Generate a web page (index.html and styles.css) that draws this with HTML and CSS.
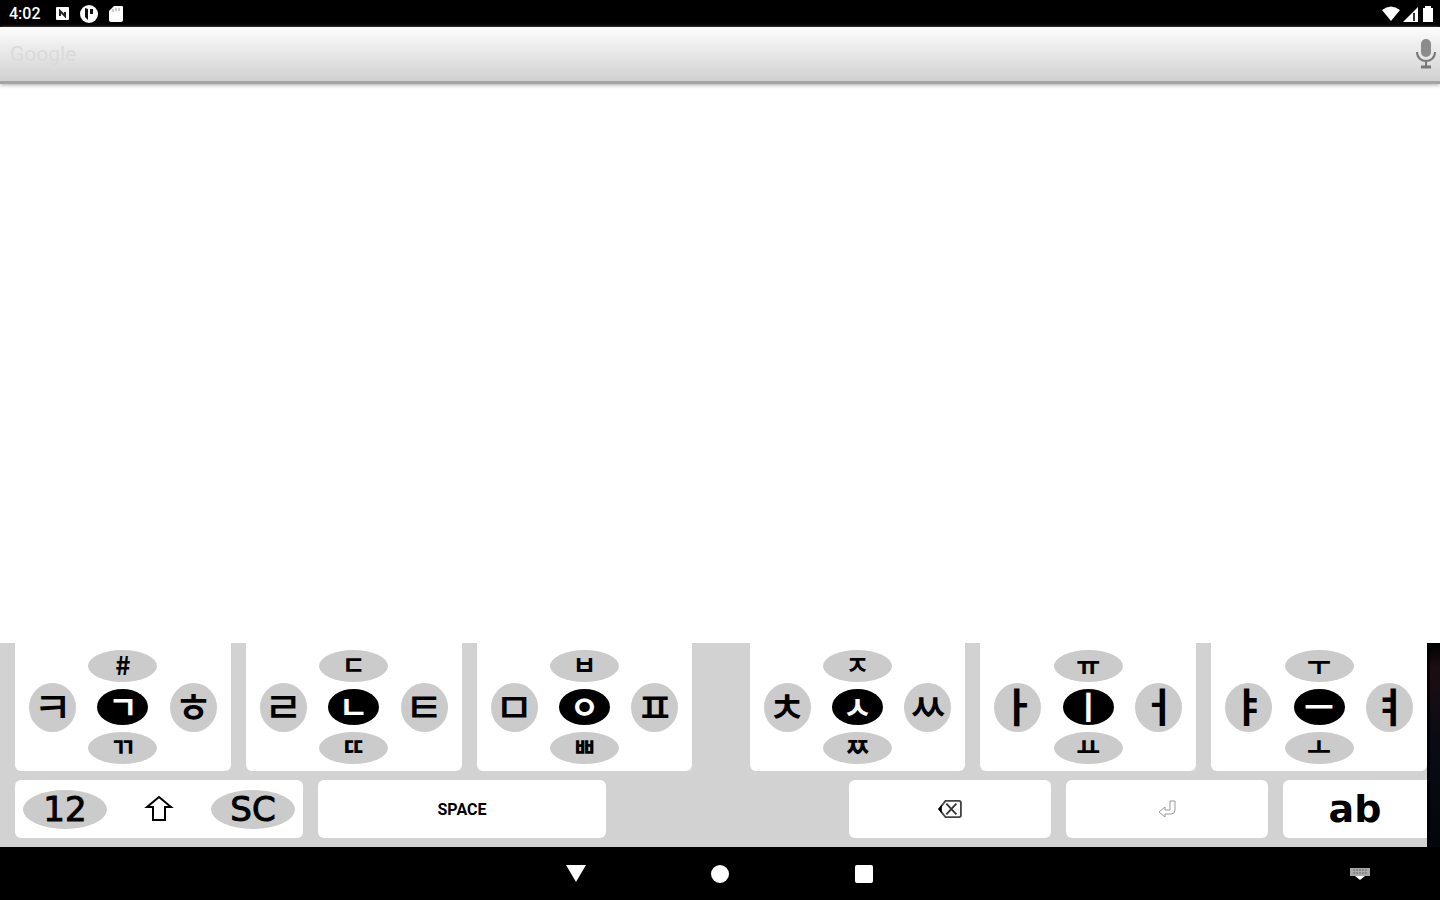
FILE: index.html
```html
<!DOCTYPE html>
<html lang="ko">
<head>
    <meta charset="UTF-8">
    <meta name="viewport" content="width=device-width, initial-scale=1.0">
    <title>Keyboard</title>
    <link rel="stylesheet" href="styles.css">
</head>
<body>
    <header class="status-bar">
        <span class="clock">4:02</span>
        <svg class="status-icon" viewBox="0 0 18 18">
            <rect x="3" y="2" width="13" height="13" rx="1" fill="#fff"/>
            <path d="M7 11V6l5 5V7" fill="none" stroke="#222" stroke-width="2"/>
        </svg>
        <svg class="status-icon" viewBox="0 0 18 18">
            <circle cx="9" cy="9" r="9" fill="#fff"/>
            <path d="M5 3v9l3 3V4zM10 4h3v5h-3z" fill="#111"/>
        </svg>
        <svg class="status-icon" viewBox="0 0 18 18">
            <path d="M7 1h8q1 0 1 1v13q0 2-2 2H4q-2 0-2-2V6z" fill="#fff"/>
            <path d="M6 4v3M9 3v3M12 3v3" stroke="#999" stroke-width="1"/>
        </svg>
        <div class="status-right">
            <svg width="18" height="16" viewBox="0 0 18 16"><path d="M0 4q9-7 18 0L9 15z" fill="#fff"/></svg>
            <svg width="16" height="16" viewBox="0 0 16 16">
                <path d="M0 16 15 1v15z" fill="#fff"/>
                <path d="M11 7v8" stroke="#333" stroke-width="2"/>
            </svg>
            <svg width="12" height="16" viewBox="0 0 12 16"><path d="M3 2V0h6v2h2v14H1V2z" fill="#fff"/></svg>
        </div>
    </header>

    <form class="search-bar">
        <label for="search">Google</label>
        <input type="text" id="search" name="search">
        <button type="button" class="mic" aria-label="Voice search">
            <svg width="20" height="32" viewBox="0 0 20 32">
                <rect x="5" y="1" width="10" height="18" rx="5" fill="#8c8c8c"/>
                <path d="M1 14c0 12 18 12 18 0M10 23v6" fill="none" stroke="#777" stroke-width="2"/>
                <path d="M5 29h10" stroke="#777" stroke-width="3"/>
            </svg>
        </button>
    </form>

    <main class="page"></main>

    <section class="keyboard-area">
        <div class="keyboard">
            <div class="letter-row">
                <div class="key-group">
                    <div class="key">
                        <button class="side">ㅋ</button>
                        <div class="middle">
                            <button class="wide">#</button>
                            <button class="center">ㄱ</button>
                            <button class="wide">ㄲ</button>
                        </div>
                        <button class="side">ㅎ</button>
                    </div>
                    <div class="key">
                        <button class="side">ㄹ</button>
                        <div class="middle">
                            <button class="wide">ㄷ</button>
                            <button class="center">ㄴ</button>
                            <button class="wide">ㄸ</button>
                        </div>
                        <button class="side">ㅌ</button>
                    </div>
                    <div class="key">
                        <button class="side">ㅁ</button>
                        <div class="middle">
                            <button class="wide">ㅂ</button>
                            <button class="center">ㅇ</button>
                            <button class="wide">ㅃ</button>
                        </div>
                        <button class="side">ㅍ</button>
                    </div>
                </div>
                <div class="key-group">
                    <div class="key">
                        <button class="side">ㅊ</button>
                        <div class="middle">
                            <button class="wide">ㅈ</button>
                            <button class="center">ㅅ</button>
                            <button class="wide">ㅉ</button>
                        </div>
                        <button class="side">ㅆ</button>
                    </div>
                    <div class="key">
                        <button class="side vowel">ㅏ</button>
                        <div class="middle">
                            <button class="wide">ㅠ</button>
                            <button class="center">ㅣ</button>
                            <button class="wide">ㅛ</button>
                        </div>
                        <button class="side vowel">ㅓ</button>
                    </div>
                    <div class="key">
                        <button class="side vowel">ㅑ</button>
                        <div class="middle">
                            <button class="wide">ㅜ</button>
                            <button class="center">ㅡ</button>
                            <button class="wide">ㅗ</button>
                        </div>
                        <button class="side vowel">ㅕ</button>
                    </div>
                </div>
            </div>
            <div class="bottom-row">
                <div class="mode-key">
                    <button class="mode">12</button>
                    <button class="shift" aria-label="Shift">
                        <svg width="30" height="28" viewBox="0 0 30 28"><path d="M15 2 3 12h6v13h12V12h6z" fill="none" stroke="#000" stroke-width="2"/></svg>
                    </button>
                    <button class="mode">SC</button>
                </div>
                <button class="flat-key space">SPACE</button>
                <div></div>
                <button class="flat-key" aria-label="Delete">
                    <svg width="26" height="20" viewBox="0 0 28 22">
                        <path d="M2 11 9 2h15q2 0 2 2v14q0 2-2 2H9z" fill="none" stroke="#444" stroke-width="2"/>
                        <path d="m10 5 11 12M21 5 10 17" stroke="#333" stroke-width="2"/>
                        <path d="M1 11 5 6v10z" fill="#000"/>
                    </svg>
                </button>
                <button class="flat-key" aria-label="Enter">
                    <svg width="20" height="20" viewBox="0 0 20 20"><path d="M13 2h5v9q0 4-4 4H8v3l-6-5 6-5v3h5z" fill="none" stroke="#999" stroke-width="1"/></svg>
                </button>
                <button class="flat-key alpha">ab</button>
            </div>
        </div>
        <div class="edge"></div>
    </section>

    <nav class="nav-bar">
        <button aria-label="Back"><svg width="20" height="20" viewBox="0 0 20 20"><path d="M0 1h20L10 18z" fill="#fff"/></svg></button>
        <button aria-label="Home"><svg width="20" height="20" viewBox="0 0 20 20"><circle cx="10" cy="10" r="9" fill="#fff"/></svg></button>
        <button aria-label="Recent apps"><svg width="20" height="20" viewBox="0 0 20 20"><rect x="1" y="1" width="18" height="18" rx="2" fill="#fff"/></svg></button>
        <button class="keyboard-toggle" aria-label="Keyboard">
            <svg width="20" height="12" viewBox="0 0 20 12">
                <path d="M0 0h20v8H0z" fill="#aaa"/>
                <path d="M3 2h14M3 5h14" stroke="#666" stroke-dasharray="2 1"/>
                <path d="M5 8h10l-5 4z" fill="#fff"/>
            </svg>
        </button>
    </nav>
</body>
</html>
```

FILE: styles.css
```css
* {
    box-sizing: border-box;
}
body {
    margin: 0;
    min-height: 100vh;
    display: flex;
    flex-direction: column;
    background: #fff;
    font-family: Roboto, "Noto Sans CJK KR", sans-serif;
}
button {
    display: flex;
    justify-content: center;
    align-items: center;
    padding: 0;
    border: none;
    background: none;
    color: #000;
    font-family: inherit;
    cursor: pointer;
}
svg {
    display: block;
}

/* status bar */
.status-bar {
    display: flex;
    align-items: center;
    gap: 9px;
    height: 27px;
    padding: 0 6px 0 9px;
    background: #000;
    color: #fff;
}
.clock {
    width: 35px;
    font-size: 16px;
    font-weight: 500;
}
.status-icon {
    width: 18px;
    height: 18px;
}
.status-right {
    display: flex;
    gap: 3px;
    margin-left: auto;
}

/* search */
.search-bar {
    display: flex;
    align-items: center;
    height: 57px;
    padding: 0 4px 0 10px;
    background: linear-gradient(#fdfdfd, #d0d0d0);
    border-bottom: 3px solid #a4a4a4;
    box-shadow: 0 1px 4px #aaa;
}
.search-bar label {
    color: #dadada;
    font-size: 21px;
}
.search-bar input {
    flex: 1;
    height: 40px;
    border: none;
    outline: none;
    background: none;
    font-size: 20px;
}
.page {
    flex: 1;
}

/* keyboard */
.keyboard-area {
    display: flex;
}
.keyboard {
    flex: 1;
    padding: 0 0 9px 15px;
    background: #d2d2d2;
}
.edge {
    width: 13px;
    border-left: 3px solid #000;
    background: linear-gradient(#000, #1c0e12 12%, #090a14 50%, #05060c);
}
.letter-row {
    display: flex;
    gap: 57px;
}
.key-group {
    flex: 1;
    display: grid;
    grid-template-columns: repeat(3, 1fr);
    gap: 15px;
}
.key {
    display: flex;
    justify-content: space-between;
    align-items: center;
    padding: 7px 14px;
    border-radius: 0 0 6px 6px;
    background: #fff;
}
.middle {
    display: flex;
    flex-direction: column;
    align-items: center;
    gap: 7px;
}
.side, .wide, .center {
    padding-bottom: 4px;
    border-radius: 50%;
    background: #cbcbcb;
    font-family: "Noto Sans CJK KR", sans-serif;
    font-weight: 500;
    line-height: 1;
}
.side {
    width: 47px;
    height: 49px;
    font-size: 42px;
}
.wide {
    width: 69px;
    height: 32px;
    font-size: 26px;
    font-weight: 700;
}
.center {
    width: 51px;
    height: 36px;
    background: #000;
    color: #fff;
    font-size: 32px;
    font-weight: 700;
}
.side.vowel {
    font-size: 40px;
    font-weight: 700;
}
.bottom-row {
    display: grid;
    grid-template-columns: 288fr 288fr 213fr 202fr 202fr 144fr;
    gap: 15px;
    margin-top: 9px;
}
.mode-key, .flat-key {
    height: 58px;
    border-radius: 6px;
    background: #fff;
}
.mode-key {
    display: flex;
    justify-content: space-between;
    align-items: center;
    padding: 0 8px;
}
.mode {
    width: 84px;
    height: 39px;
    border-radius: 50%;
    background: #cbcbcb;
    font-family: "DejaVu Sans", sans-serif;
    font-size: 34px;
    line-height: 1;
    -webkit-text-stroke: 1px #000;
}
.space {
    font-size: 16px;
    font-weight: 700;
}
.alpha {
    border-radius: 6px 0 0 6px;
    font-family: "DejaVu Sans", sans-serif;
    font-size: 38px;
    font-weight: 700;
    line-height: 1;
}

/* navigation */
.nav-bar {
    display: grid;
    grid-template-columns: 1fr 20px 20px 20px 1fr;
    align-items: center;
    column-gap: 124px;
    height: 53px;
    background: #000;
}
.nav-bar button:first-child {
    grid-column: 2;
}
.nav-bar .keyboard-toggle {
    justify-self: end;
    margin-right: 70px;
}
```
